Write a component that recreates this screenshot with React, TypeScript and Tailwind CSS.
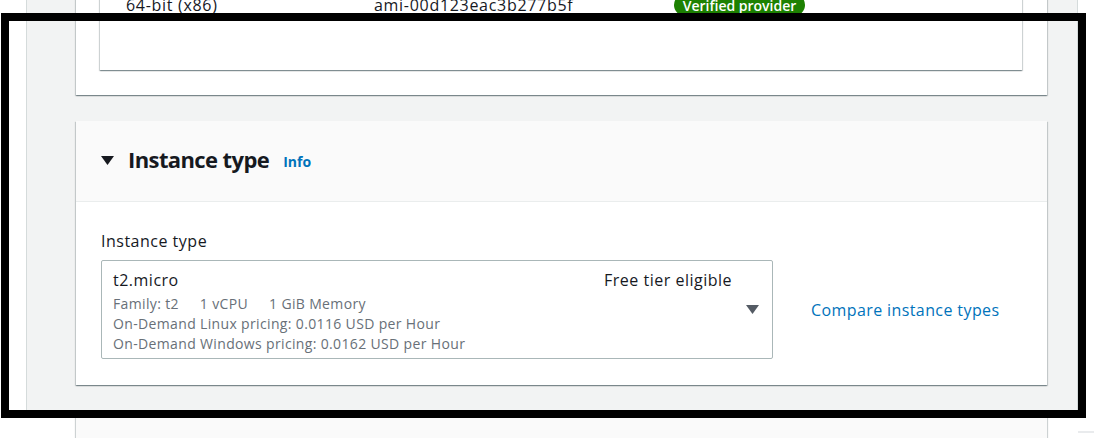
import React from "react";

const cardShadow =
  "shadow-[0_1px_1px_0_rgba(0,28,36,0.3),1px_1px_1px_0_rgba(0,28,36,0.15),-1px_1px_1px_0_rgba(0,28,36,0.15)]";

export default function App() {
  return (
    <div
      className="relative w-[1094px] h-[438px] overflow-hidden bg-white text-[#16191f]"
      style={{ fontFamily: '"Open Sans", "Noto Sans", Arial, sans-serif' }}
    >
      <div className="ml-[26px] w-[1052px] h-full bg-[#f2f3f3] border-l border-r border-[#d5dbdb] pl-[49px]">
        {/* Card 1 (partial) */}
        <div className={`-mt-[20px] w-[971px] bg-white pl-[24px] pr-[25px] pb-[25px] ${cardShadow}`}>
          <div className={`bg-white pt-[13px] pb-[53px] pl-[26px] ${cardShadow}`}>
            <div className="flex items-center h-[24px] text-[16px] tracking-[0.7px]">
              <div className="w-[248px]">64-bit (x86)</div>
              <div className="w-[300px]">ami-00d123eac3b277b5f</div>
              <div className="h-[22px] w-[131px] rounded-full bg-[#1d8102] text-white text-[14px] tracking-normal font-semibold flex items-center justify-center">
                Verified provider
              </div>
            </div>
          </div>
        </div>

        {/* Card 2 */}
        <div className={`mt-[26px] w-[971px] bg-white ${cardShadow}`}>
          <div className="h-[81px] bg-[#fafafa] border-b border-[#eaeded] pl-[25px] flex items-center">
            <svg width="13" height="10" viewBox="0 0 13 10" className="mt-[-1px]">
              <polygon points="0,0 13,0 6.5,9" fill="#16191f" />
            </svg>
            <span className="ml-[14px] mt-[-4px] text-[22px] font-bold leading-[28px] tracking-[-0.6px]">Instance type</span>
            <span className="ml-[14px] mt-[1px] text-[14px] font-bold text-[#0073bb]">Info</span>
          </div>
          <div className="pt-[27px] pl-[25px] pb-[26px]">
            <div className="text-[16px] leading-[24px] tracking-[0.5px]">Instance type</div>
            <div className="mt-[7px] flex items-center">
              <div className="w-[672px] h-[99px] border border-[#aab7b8] rounded-[2px] flex">
                <div className="flex-1 pl-[11px] pt-[7px]">
                  <div className="flex justify-between text-[16px] leading-[24px] tracking-[0.5px]">
                    <span>t2.micro</span>
                    <span>Free tier eligible</span>
                  </div>
                  <div className="mt-[2px] text-[14px] leading-[20px] text-[#687078] tracking-[0.35px]">
                    <div className="flex gap-[21px]">
                      <span>Family: t2</span>
                      <span>1 vCPU</span>
                      <span>1 GiB Memory</span>
                    </div>
                    <div>On-Demand Linux pricing: 0.0116 USD per Hour</div>
                    <div>On-Demand Windows pricing: 0.0162 USD per Hour</div>
                  </div>
                </div>
                <div className="w-[40px] flex items-center justify-center">
                  <svg width="13" height="10" viewBox="0 0 13 10">
                    <polygon points="0,0 13,0 6.5,9" fill="#545b64" />
                  </svg>
                </div>
              </div>
              <span className="ml-[38px] text-[16px] tracking-[0.4px] text-[#0073bb]">Compare instance types</span>
            </div>
          </div>
        </div>

        {/* Card 3 (partial) */}
        <div className={`mt-[26px] w-[971px] h-[60px] bg-[#fafafa] ${cardShadow}`} />
      </div>

      {/* small line at right edge */}
      <div className="absolute left-[1078px] top-[431px] w-[16px] h-[2px] bg-[#e9ebed]" />

      {/* black highlight frame overlay */}
      <div className="absolute left-[1px] top-[13px] w-[1085px] h-[405px] border-[8px] border-black" />
    </div>
  );
}
